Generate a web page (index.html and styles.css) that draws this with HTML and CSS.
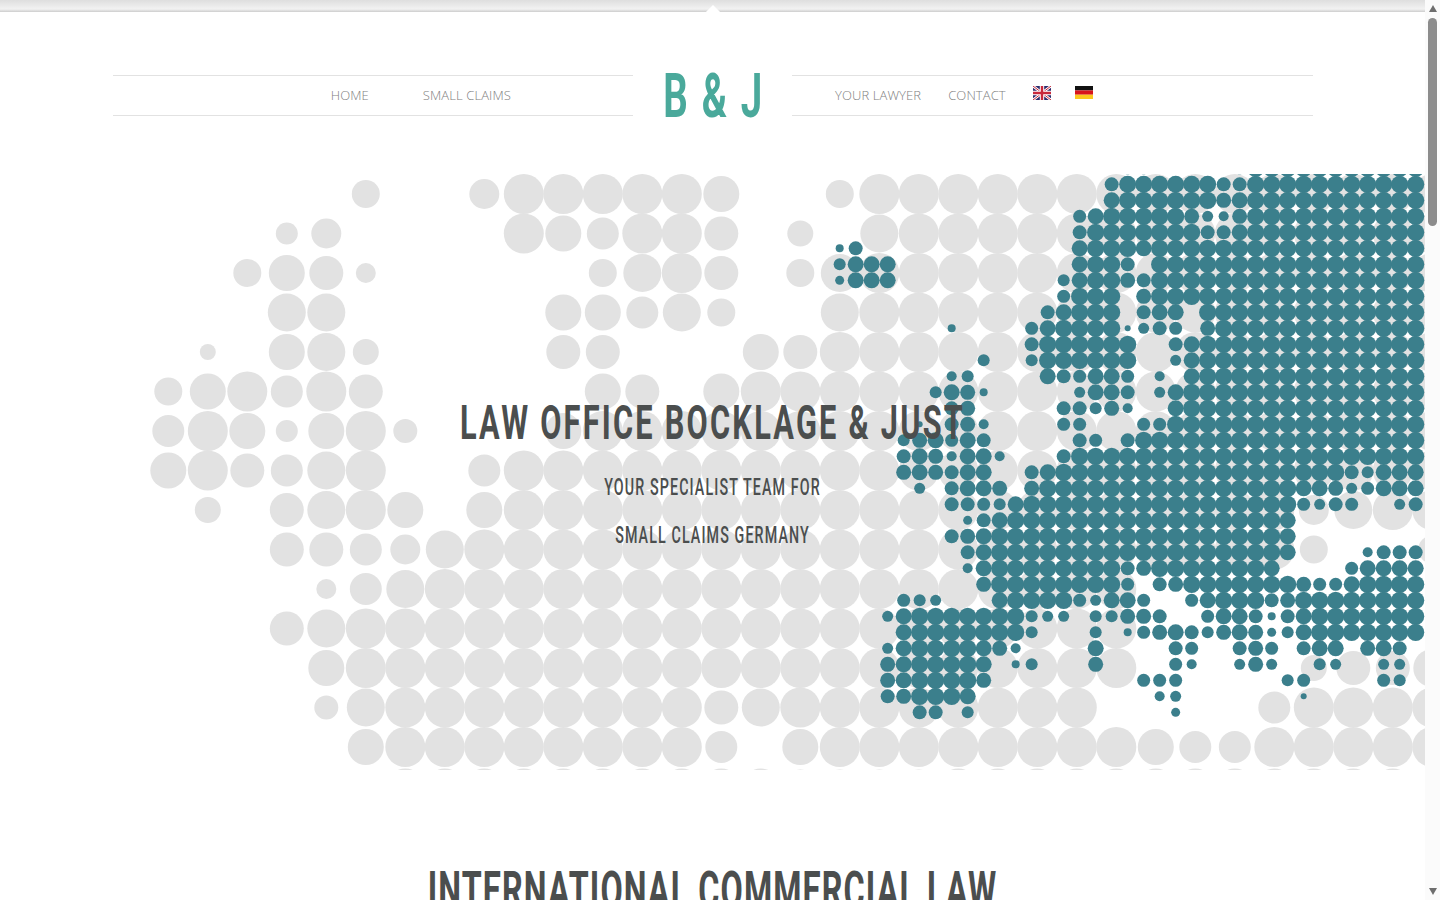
FILE: index.html
```html
<!DOCTYPE html>
<html lang="en">
<head>
    <meta charset="UTF-8">
    <meta name="viewport" content="width=device-width, initial-scale=1.0">
    <title>Law Office Bocklage &amp; Just</title>
    <link rel="stylesheet" href="styles.css">
</head>
<body>
    <div class="page">
        <div class="main">
            <div class="topbar"><span class="topbar-tip"></span></div>

            <header class="site-header">
                <nav class="nav nav-left">
                    <a href="#">HOME</a>
                    <a href="#">SMALL CLAIMS</a>
                </nav>
                <a class="logo" href="#">B &amp; J</a>
                <nav class="nav nav-right">
                    <a href="#">YOUR LAWYER</a>
                    <a href="#">CONTACT</a>
                    <a class="flag" href="#">
                        <svg width="18" height="14" viewBox="0 0 18 14">
                            <rect width="18" height="14" fill="#2b2a6b"/>
                            <path d="M0 0L18 14M18 0L0 14" stroke="#fff" stroke-width="2.6"/>
                            <path d="M0 0L18 14M18 0L0 14" stroke="#c8283c" stroke-width="1"/>
                            <path d="M9 0V14M0 7H18" stroke="#fff" stroke-width="4.4"/>
                            <path d="M9 0V14M0 7H18" stroke="#c8283c" stroke-width="2.4"/>
                        </svg>
                    </a>
                    <a class="flag flag-de" href="#">
                        <svg width="18" height="13" viewBox="0 0 18 13">
                            <rect width="18" height="4.4" fill="#111"/>
                            <rect y="4.4" width="18" height="4.3" fill="#d8141c"/>
                            <rect y="8.7" width="18" height="4.3" fill="#fbc81e"/>
                        </svg>
                    </a>
                </nav>
            </header>

            <section class="hero">
                <svg id="map" class="hero-map" viewBox="0 174 1425 596"></svg>
                <div class="hero-text">
                    <h1>LAW OFFICE BOCKLAGE &amp; JUST</h1>
                    <p>YOUR SPECIALIST TEAM FOR</p>
                    <p>SMALL CLAIMS GERMANY</p>
                </div>
            </section>

            <section class="intro">
                <h2>INTERNATIONAL COMMERCIAL LAW</h2>
            </section>
        </div>

        <div class="scrollbar">
            <span class="arrow arrow-up"></span>
            <span class="thumb"></span>
            <span class="arrow arrow-down"></span>
        </div>
    </div>

    <script src="map.js"></script>
</body>
</html>
```

FILE: styles.css
```css
* {
    margin: 0;
    padding: 0;
    box-sizing: border-box;
}

html, body {
    height: 100%;
    overflow: hidden;
}

body {
    font-family: Roboto, "Liberation Sans", sans-serif;
    background: #fff;
    color: #4b4e4e;
}

a {
    text-decoration: none;
    color: inherit;
}

.page {
    display: flex;
    height: 900px;
}

.main {
    width: 1425px;
    overflow: hidden;
}

.topbar {
    position: relative;
    height: 12px;
    background: linear-gradient(#dedede, #f2f2f2 75%, #cdcdcd);
}

.topbar-tip {
    position: absolute;
    left: 707.5px;
    top: 7px;
    width: 10px;
    height: 10px;
    background: #fff;
    transform: rotate(45deg);
}

.site-header {
    display: grid;
    grid-template-columns: 1fr 159px 1fr;
    width: 1200px;
    height: 41px;
    margin: 63px auto 0;
}

.nav {
    display: flex;
    align-items: center;
    padding-bottom: 2px;
    border-top: 1px solid #e2e2e2;
    border-bottom: 1px solid #e2e2e2;
    font-family: "Open Sans", sans-serif;
    font-weight: 300;
    font-size: 13px;
    letter-spacing: 0.1px;
    color: #808080;
}

.nav-left {
    justify-content: flex-end;
    gap: 54px;
    padding-right: 122px;
}

.nav-right {
    gap: 27px;
    padding-left: 43px;
}

.flag {
    display: flex;
    margin-top: -3px;
}

.flag-de {
    margin-left: -3px;
    margin-top: -4px;
}

/* the heading font is condensed, nothing installed is, so these get squeezed */
.logo,
.hero-text h1,
.hero-text p,
.intro h2 {
    white-space: nowrap;
    transform: scaleX(0.62);
}

.logo {
    display: block;
    padding-right: 6px;
    text-align: center;
    font-size: 62px;
    font-weight: 700;
    line-height: 41px;
    letter-spacing: 3.5px;
    color: #4aa99b;
}

.hero {
    position: relative;
    height: 596px;
    margin-top: 58px;
}

.hero-map {
    position: absolute;
    left: 0;
    top: 0;
    width: 1425px;
    height: 596px;
}

.hero-text {
    position: relative;
    padding-top: 222px;
    text-align: center;
}

.hero-text h1 {
    font-size: 48px;
    font-weight: 700;
    line-height: 54px;
    letter-spacing: 3.5px;
    margin-bottom: 14px;
    transform: scaleX(0.64);
}

.hero-text p {
    font-size: 23px;
    font-weight: 500;
    line-height: 48px;
    letter-spacing: 1.8px;
}

.intro {
    padding-top: 91px;
    text-align: center;
}

.intro h2 {
    font-size: 52px;
    font-weight: 700;
    line-height: 60px;
    letter-spacing: 1.8px;
}

.scrollbar {
    display: flex;
    flex-direction: column;
    align-items: center;
    width: 15px;
    background: #fbfbfb;
}

.arrow {
    width: 0;
    height: 0;
    border-left: 4px solid transparent;
    border-right: 4px solid transparent;
}

.arrow-up {
    margin-top: 5px;
    border-bottom: 7px solid #6e6e6e;
}

.arrow-down {
    margin-top: auto;
    margin-bottom: 5px;
    border-top: 7px solid #6e6e6e;
}

.thumb {
    width: 9px;
    height: 208px;
    margin-top: 6px;
    border-radius: 5px;
    background: #8c8c8c;
}
```

FILE: map.js
```js
// Dot map of the hero. One string per row, one char per column, '.' = no dot,
// spaces are only there to count columns. Short rows are filled up with the full dot.

var SVG_NS = 'http://www.w3.org/2000/svg';

// char = radius (base 36, k = 20)
var greyRows = [
    '..... e..fk kkkki ..e',
    '...bf ....k igkkh .d.j',
    '..eih a.... .ejkh .ej',
    '...jj ..... iigje ..j',
    '.8.ij d.... hh... ih',
    'eikgk h.... .ih.i',
    'gkibi kc... i',
    'ikhgj k..gk',
    '.d.hj ki.ik kkkkk kkkkk kkkkk kkkkf jkk',
    '...hh gfjkk kkkkk kkkkk kkkkk kkkke ..eh',
    '....a gjkkk kkkkk kkkkk kkkkk ..... ...',
    '...hj kkkkk kkkkk kkkkk kkkkk ..... ...',
    '....i kkkkk kkkkk kkkkk kkkkk ....d hhj',
    '....c jkkkk kkkkh jkkkk kkkk. ...gk kkk',
    '..... ikkkk kkkkg .ikkk kkkkk iggkk kkk',
    '..... .iiii iiiii ihhhh iiiii iiiii iii'
];

// char = diameter (base 36, i = 18). First row lies above the map edge.
var tealRows = [
    '..... ..... ..... ...cc ..... c',
    '..... ..... ..... ..ehh hhhhe e',
    '..... ..... ..... ..gii iiiif g',
    '..... ..... ..... dgiii iifba f',
    '..... ..... ..... eiiii iiiee g',
    '8e... ..... ..... giiig',
    'cggg. ..... ..... giie.',
    '9ggg. ..... ....c giife',
    '..... ..... ....d iii.f',
    '..... ..... ...eg iii.e gg.',
    '..... ..8.. ..dgi iii6b ed.f',
    '..... ..... ..eii iiii. .eg',
    '..... ....c ..cii iiii. .bg',
    '..... ..ac. ...ge dggd. a.g',
    '..... .cgf8 ..... bgge. bg',
    '..... ..ef. ....e ecfa. .g',
    '..... 6.efa ....d d...d d',
    '....c fgdge ..... ed.e',
    '....e gfagg a...e',
    '....f gfegg ..egi iiiii iiiii iiiii iiecg gg',
    '..... b.egg f.fii iiiii iiiii iiiig gfbdg gg',
    '..... ..eed cgiii iiiii iiiii iiiid bed.. be',
    '..... ...9e giiii iiiii iiiii iiig. ..... ..',
    '..... ..efg iiiii iiiii iiiii iiig. ..... ..',
    '..... ...eg iiiii iiiii iiiii iiig. ...ae ee',
    '..... ...ag iiiii iiief iiiii iig.. ..dgg gg',
    '..... ....f iiiii iiid. efiii iiiif ddgii ii',
    '....d cb... giiii dbggd ..dgi iiefi iiiii ii',
    '...bg iiiii iicbb .ccff e..dg ge8eg iiiii ii',
    '....g iiiii iic.. .c.8d fgecf gf9cg iiiii ii',
    '...bg iiiig fa... .g... .ed.. efd.e gg.fg e.',
    '...fg iiiig .8c.. .f... .da.. bfb.. cb..b b.',
    '...fg iiiif ..... ....d dd... ...cd ....d c.',
    '...ef iiig. ..... ..... ab... ....6 ..... ..',
    '..... ee.c. ..... ..... .9... ..... ..... ..'
];

function drawRows(svg, rows, opts) {
    rows.forEach(function (row, r) {
        var cells = row.replace(/ /g, '').padEnd(opts.cols, opts.fill);
        for (var c = 0; c < opts.cols; c++) {
            if (cells[c] === '.') continue;
            var dot = document.createElementNS(SVG_NS, 'circle');
            dot.setAttribute('cx', opts.x + c * opts.step);
            dot.setAttribute('cy', opts.y + r * opts.step);
            dot.setAttribute('r', Math.min(parseInt(cells[c], 36) * opts.scale, opts.max));
            dot.setAttribute('fill', opts.color);
            svg.appendChild(dot);
        }
    });
}

var map = document.getElementById('map');
drawRows(map, greyRows, { cols: 33, fill: 'k', x: 168.3, y: 194, step: 39.5, scale: 1, max: 20, color: '#e2e2e2' });
drawRows(map, tealRows, { cols: 37, fill: 'i', x: 839.67, y: 168.33, step: 16, scale: 0.5, max: 8.6, color: '#3b7f8c' });
```
